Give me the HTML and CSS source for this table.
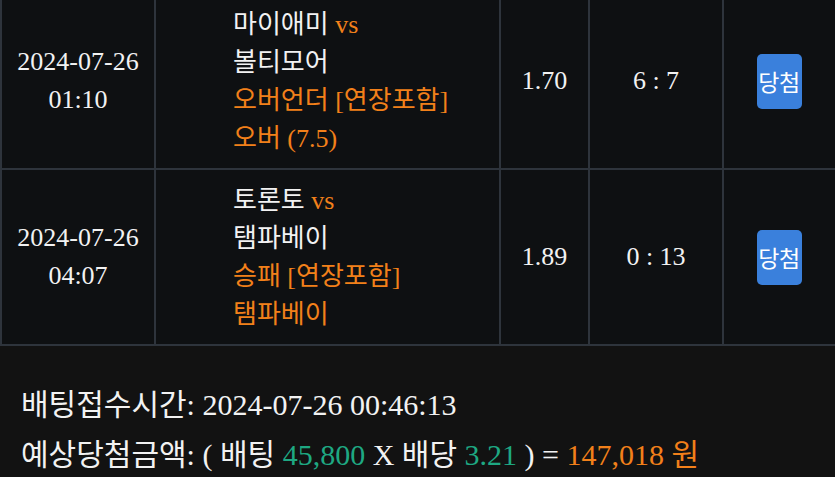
FILE: index.html
```html
<!DOCTYPE html>
<html lang="ko">
<head>
<meta charset="utf-8">
<link rel="stylesheet" href="styles.css">
</head>
<body>
<div class="page">
  <div class="table">
    <div class="cell date"><div>2024-07-26</div><div>01:10</div></div>
    <div class="cell match">
      <div>마이애미 <span class="o">vs</span></div>
      <div>볼티모어</div>
      <div class="o">오버언더 [연장포함]</div>
      <div class="o">오버 (7.5)</div>
    </div>
    <div class="cell center">1.70</div>
    <div class="cell center">6 : 7</div>
    <div class="cell center"><span class="btn">당첨</span></div>

    <div class="cell date"><div>2024-07-26</div><div>04:07</div></div>
    <div class="cell match">
      <div>토론토 <span class="o">vs</span></div>
      <div>탬파베이</div>
      <div class="o">승패 [연장포함]</div>
      <div class="o">탬파베이</div>
    </div>
    <div class="cell center">1.89</div>
    <div class="cell center">0 : 13</div>
    <div class="cell center"><span class="btn">당첨</span></div>
  </div>
  <div class="summary">
    <div>배팅접수시간: 2024-07-26 00:46:13</div>
    <div>예상당첨금액: ( 배팅 <span class="g">45,800</span> X 배당 <span class="g">3.21</span> ) = <span class="o">147,018 원</span></div>
  </div>
</div>
</body>
</html>
```

FILE: styles.css
```css
html, body {
  margin: 0;
  padding: 0;
  background: #121212;
  overflow: hidden;
}
body {
  width: 835px;
  height: 477px;
  color: #f2f2f2;
  font-family: "Liberation Serif", "Noto Sans CJK KR", serif;
}
.page {
  width: 835px;
  overflow: hidden;
}
.table {
  display: grid;
  grid-template-columns: 152px 343px 87px 132px 112px;
  gap: 2px;
  padding: 2px 0 2px 2px;
  margin-top: -8px;
  background: #2e343c;
  width: 837px;
  box-sizing: border-box;
  font-size: 26px;
}
.cell {
  background: #0e1012;
}
.o { color: #f2801a; }
.g { color: #1ea882; }
.date {
  display: flex;
  flex-direction: column;
  justify-content: center;
  align-items: center;
  line-height: 38px;
}
.match {
  padding: 12px 0 10px 77px;
  line-height: 38px;
}
.match > div {
  height: 38px;
  white-space: nowrap;
}
.center {
  display: flex;
  align-items: center;
  justify-content: center;
}
.btn {
  display: block;
  width: 45px;
  height: 55px;
  line-height: 54px;
  text-align: center;
  background: #3a80dc;
  border-radius: 5px;
  color: #ffffff;
  font-family: "Noto Sans CJK KR", sans-serif;
  font-size: 23px;
  letter-spacing: -0.5px;
  margin-left: -2px;
  white-space: nowrap;
}
.summary {
  padding: 34px 0 0 21px;
  font-size: 30px;
  line-height: 50px;
  white-space: nowrap;
}
```
